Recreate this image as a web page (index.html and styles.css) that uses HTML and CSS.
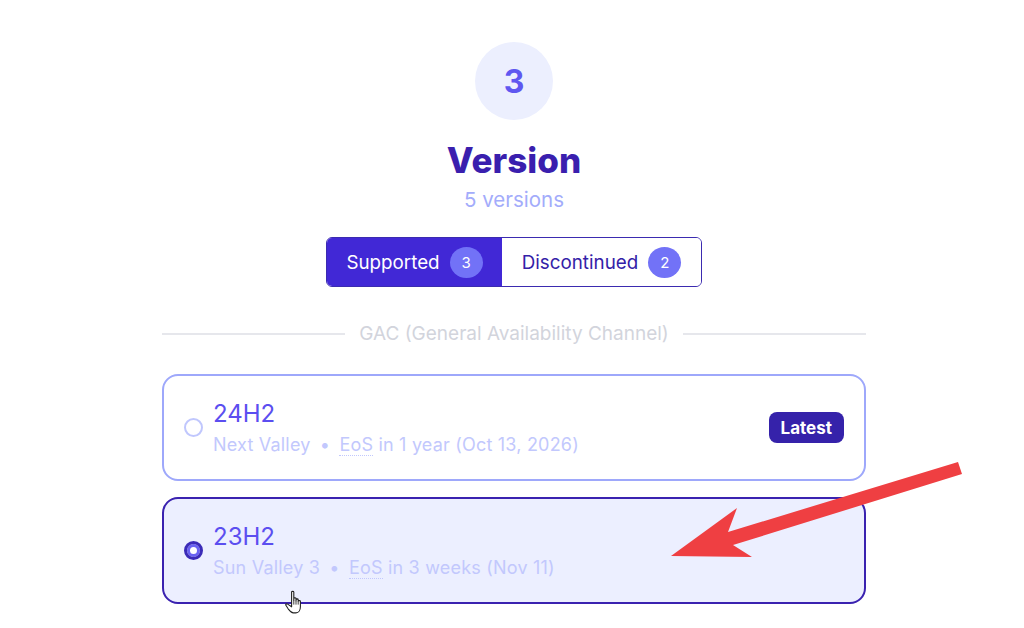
FILE: index.html
```html
<!DOCTYPE html>
<html>
<head>
<meta charset="utf-8">
<link rel="stylesheet" href="styles.css">
</head>
<body>
<div class="page">
  <div class="step">3</div>
  <h1 class="title">Version</h1>
  <div class="count">5 versions</div>
  <div class="toggle">
    <div class="tab tab-active">Supported <span class="badge">3</span></div>
    <div class="tab">Discontinued <span class="badge">2</span></div>
  </div>
  <div class="divider"><span class="line"></span><span class="divider-text">GAC (General Availability Channel)</span><span class="line"></span></div>
  <div class="card">
    <span class="radio"></span>
    <div class="info">
      <div class="name">24H2</div>
      <div class="meta">Next Valley <span class="dot">•</span> <span class="abbr">EoS</span> in 1 year (Oct 13, 2026)</div>
    </div>
    <span class="latest">Latest</span>
  </div>
  <div class="card card-selected">
    <span class="radio radio-on"></span>
    <div class="info">
      <div class="name">23H2</div>
      <div class="meta">Sun Valley 3 <span class="dot">•</span> <span class="abbr">EoS</span> in 3 weeks (Nov 11)</div>
    </div>
  </div>
</div>
<svg class="arrow" width="1024" height="628" viewBox="0 0 1024 628">
  <path d="M958 462 L962 474 L733 545 L752 557 L671 556 L737 508 L728 532 Z" fill="#ef3f42"/>
</svg>
<svg class="cursor" width="22" height="27" viewBox="0 0 20 24">
  <path d="M6 1.5 C6 0.6 8 0.6 8 1.5 L8 9 L8 7.5 C8 6.6 10 6.6 10 7.5 L10 9.5 L10 8.5 C10 7.6 12 7.6 12 8.5 L12 10 C12 9.2 14 9.2 14 10 L14 15 C14 18 12.5 20.5 10 20.5 L7.5 20.5 C5.5 20.5 4.5 19 3 17 L0.8 13.6 C0.3 12.8 1.6 11.8 2.4 12.6 L6 15 Z" fill="#fff" stroke="#222" stroke-width="1" stroke-linejoin="round"/>
  <path d="M8 9 L8 13 M10 9.5 L10 13 M12 10 L12 13" stroke="#222" stroke-width="0.8"/>
</svg>
</body>
</html>
```
FILE: styles.css
```css
html, body {
  margin: 0;
  padding: 0;
  background: #ffffff;
}
body {
  font-family: Inter, "Liberation Sans", sans-serif;
  width: 1024px;
  height: 628px;
  overflow: hidden;
  position: relative;
}
.page {
  padding: 42px 0 0 4px;
  display: flex;
  flex-direction: column;
  align-items: center;
}
.step {
  width: 78px;
  height: 78px;
  border-radius: 50%;
  background: #eceffe;
  color: #5f57f0;
  font-weight: 700;
  font-size: 32px;
  display: flex;
  align-items: center;
  justify-content: center;
}
.title {
  margin: 20px 0 0;
  font-size: 35px;
  line-height: 40px;
  font-weight: 800;
  color: #3a1fae;
  letter-spacing: 0;
}
.count {
  margin-top: 8px;
  font-size: 20.5px;
  line-height: 24px;
  color: #a3acfb;
}
.toggle {
  margin-top: 25px;
  display: flex;
  width: 376px;
  height: 50px;
  box-sizing: border-box;
  border: 1px solid #3b2bb0;
  border-radius: 6px;
  overflow: hidden;
}
.tab {
  flex: 1 1 auto;
  display: flex;
  align-items: center;
  justify-content: center;
  gap: 10px;
  font-size: 18.8px;
  color: #3421a8;
  background: #fff;
}
.tab-active {
  flex: 0 0 175px;
  background: #4128d6;
  color: #fff;
}
.badge {
  width: 33px;
  height: 31px;
  border-radius: 50%;
  background: #7272f7;
  color: #fff;
  font-size: 15px;
  display: flex;
  align-items: center;
  justify-content: center;
}
.divider {
  margin-top: 35px;
  width: 704px;
  display: flex;
  align-items: center;
  gap: 14px;
}
.line {
  flex: 1;
  height: 2px;
  background: #e6e7ec;
}
.divider-text {
  font-size: 19px;
  color: #d2d4dc;
  letter-spacing: 0;
}
.card {
  margin-top: 29px;
  width: 704px;
  height: 107px;
  box-sizing: border-box;
  border: 2px solid #9ea8fb;
  border-radius: 16px;
  background: #fff;
  display: flex;
  align-items: center;
  padding: 0 20px 0 20px;
}
.card-selected {
  margin-top: 16px;
  border-color: #3a22b0;
  background: #ecefff;
}
.radio {
  width: 19px;
  height: 19px;
  box-sizing: border-box;
  border: 2px solid #c0c7fd;
  border-radius: 50%;
  background: #fff;
  flex: none;
}
.radio-on {
  border: 3px solid #3b2bb8;
  background: #fff;
  box-shadow: inset 0 0 0 3px #6a62f2;
}
.info {
  margin-left: 10px;
  flex: 1;
  display: flex;
  flex-direction: column;
  gap: 6px;
}
.name {
  font-size: 24px;
  line-height: 28px;
  color: #5b4ef0;
  letter-spacing: 0;
}
.meta {
  font-size: 18px;
  line-height: 22px;
  color: #c2c8fd;
  letter-spacing: 0.2px;
}
.dot {
  margin: 0 4px;
}
.abbr {
  border-bottom: 1px dotted #c2c8fd;
}
.latest {
  background: #3522aa;
  color: #fff;
  font-weight: 700;
  font-size: 17px;
  border-radius: 8px;
  padding: 0 12px;
  height: 31px;
  display: flex;
  align-items: center;
}
.arrow {
  position: absolute;
  left: 0;
  top: 0;
  pointer-events: none;
}
.cursor {
  position: absolute;
  left: 285px;
  top: 590px;
}
```
